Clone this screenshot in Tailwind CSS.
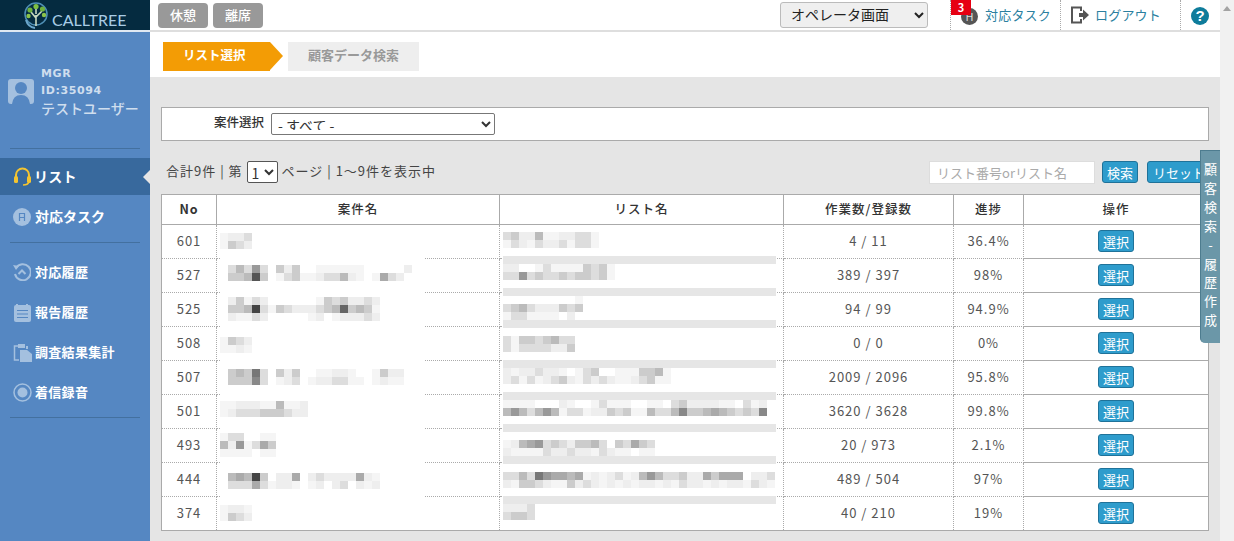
<!DOCTYPE html>
<html lang="ja">
<head>
    <meta charset="UTF-8">
    <title>CALLTREE</title>
    <script src="https://cdn.jsdelivr.net/npm/@tailwindcss/browser@4"></script>
</head>
<body class="w-[1234px] h-[541px] overflow-hidden bg-[#e5e5e5] text-[#333] text-[13px] font-['Noto_Sans_CJK_JP','Noto_Sans',sans-serif]">
<div class="flex h-[541px]">

    <!-- sidebar -->
    <aside class="w-[150px] shrink-0 h-full bg-[#5587c2] text-white">
        <div class="h-[30px] bg-[#052b40] flex items-center pl-[23px] gap-[2px]">
            <svg width="27" height="29" viewBox="0 0 27 29" class="shrink-0">
                <circle cx="13" cy="13" r="11" fill="none" stroke="#4f8fb5" stroke-width="1.5"/>
                <path d="M3 19 Q5 26 12 27" fill="none" stroke="#6ba7cc" stroke-width="2"/>
                <path d="M13 25 V14 M13 17 L8 11 M13 16 L19 10 M13 13 V7" stroke="#c9d9c0" stroke-width="1.6" fill="none"/>
                <circle cx="7" cy="9" r="2.6" fill="#6fb13d"/>
                <circle cx="13" cy="5.5" r="2.6" fill="#7fc043"/>
                <circle cx="19.500" cy="8" r="2.6" fill="#6fb13d"/>
                <circle cx="21" cy="14" r="2.2" fill="#8bc34a"/>
                <circle cx="5.500" cy="15" r="2.2" fill="#8bc34a"/>
            </svg>
            <span class="font-['Lato',sans-serif] text-[16px] leading-none text-[#a9cde6] pt-[9px]">CALLTREE</span>
        </div>
        <div class="h-[2px] bg-[#dfe8f2]"></div>

        <div class="h-[116px] flex items-center pl-[8px] pt-[2px] gap-[7px] text-[#cfdeee]">
            <svg width="26" height="25" viewBox="0 0 26 25" class="shrink-0">
                <rect width="26" height="25" rx="3" fill="#a4c0df"/>
                <circle cx="13" cy="9" r="6" fill="#5587c2"/>
                <path d="M4 25 Q5 16 13 16 Q21 16 22 25Z" fill="#5587c2"/>
            </svg>
            <div class="font-bold leading-[17.500px]">
                <div class="font-['DejaVu_Sans',sans-serif] text-[11px] tracking-[0.6px]">MGR</div>
                <div class="font-['DejaVu_Sans',sans-serif] text-[11px] tracking-[0.6px]">ID:35094</div>
                <div class="text-[14px] font-medium whitespace-nowrap">テストユーザー</div>
            </div>
        </div>
        <div class="mx-[10px] h-px bg-[#43709f]"></div>

        <nav class="mt-[9px] font-bold text-[13px] tracking-[0.3px]">
            <div class="relative h-[37px] bg-[#38699d] flex items-center pl-[13px] gap-[2px]">
                <svg width="19" height="19" viewBox="0 0 19 19" class="shrink-0">
                    <path d="M3 12 V8 A6.500 6.500 0 0 1 16 8 V12" fill="none" stroke="#f4c430" stroke-width="2"/>
                    <rect x="1" y="9" width="4" height="7" rx="1.500" fill="#f4c430"/>
                    <rect x="14" y="9" width="4" height="7" rx="1.500" fill="#f4c430"/>
                    <path d="M16 15 Q15 18 10 18" fill="none" stroke="#f4c430" stroke-width="1.500"/>
                </svg>
                <span class="text-[14px]">リスト</span>
                <span class="absolute right-0 top-[12px] border-y-[7px] border-y-transparent border-r-[7px] border-r-[#e5e5e5]"></span>
            </div>
            <div class="h-[43px] flex items-center pl-[13px] gap-[4px]">
                <svg width="18" height="18" viewBox="0 0 18 18" class="shrink-0">
                    <circle cx="9" cy="9" r="9" fill="#a4c0df"/>
                    <path d="M6.500 13 V5.500 H11.500 V13 M6.500 9.500 H11.500" fill="none" stroke="#5587c2" stroke-width="1.200"/>
                </svg>
                <span class="text-[14px] tracking-normal">対応タスク</span>
            </div>
            <div class="mx-[10px] mt-[4px] h-px bg-[#43709f]"></div>
            <div class="mt-[9px] h-[40px] flex items-center pl-[13px] gap-[4px]">
                <svg width="18" height="18" viewBox="0 0 18 18" class="shrink-0">
                    <path d="M3 5 A8 8 0 1 1 2 11" fill="none" stroke="#a4c0df" stroke-width="2"/>
                    <path d="M0 2 L6 3 L3 7Z" fill="#a4c0df"/>
                    <path d="M5.500 11 L9 7.500 L12.500 11" fill="none" stroke="#a4c0df" stroke-width="2"/>
                </svg>
                <span>対応履歴</span>
            </div>
            <div class="h-[40px] flex items-center pl-[13px] gap-[4px]">
                <svg width="18" height="19" viewBox="0 0 18 19" class="shrink-0">
                    <rect x="1" y="2" width="17" height="17" rx="2" fill="#a4c0df"/>
                    <path d="M4 1 V3 M14 1 V3" stroke="#a4c0df" stroke-width="2"/>
                    <path d="M4 7.500 H15 M4 11 H15 M4 14.500 H15" stroke="#5587c2" stroke-width="1"/>
                </svg>
                <span>報告履歴</span>
            </div>
            <div class="h-[40px] flex items-center pl-[13px] gap-[3px]">
                <svg width="19" height="19" viewBox="0 0 19 19" class="shrink-0">
                    <path d="M5 3 H1.500 V17 H6" fill="none" stroke="#a4c0df" stroke-width="1.500"/>
                    <path d="M5 1 H12 V5 H5Z M13 3 H15 V6 H13Z" fill="#a4c0df"/>
                    <path d="M7 7 H14 L19 11 V19 H7Z" fill="#a4c0df"/>
                </svg>
                <span>調査結果集計</span>
            </div>
            <div class="h-[40px] flex items-center pl-[13px] gap-[3px]">
                <svg width="19" height="19" viewBox="0 0 19 19" class="shrink-0">
                    <circle cx="9.500" cy="9.500" r="8.500" fill="none" stroke="#a4c0df" stroke-width="1.500"/>
                    <circle cx="9.500" cy="9.500" r="5" fill="#a4c0df"/>
                </svg>
                <span>着信録音</span>
            </div>
            <div class="mx-[10px] mt-[5px] h-px bg-[#43709f]"></div>
        </nav>
    </aside>

    <!-- main -->
    <main class="relative w-[1070px] shrink-0 h-full">
        <header class="relative h-[32px] bg-white border-b-2 border-[#dedede] flex items-start">
            <div class="flex gap-[5px] pl-[8px] pt-[3px] w-[630px]">
                <button class="w-[50px] h-[25px] rounded-[4px] bg-[#999] text-white font-medium text-[13px] pb-[2px]">休憩</button>
                <button class="w-[50px] h-[25px] rounded-[4px] bg-[#999] text-white font-medium text-[13px] pb-[2px]">離席</button>
            </div>
            <select class="mt-[2px] w-[148px] h-[26px] pl-[6px] pb-[4px] text-[14px] text-[#222] bg-[#efefef] border border-[#bbb] rounded-[3px]">
                <option>オペレータ画面</option>
            </select>
            <div class="relative ml-[22px] h-[30px] w-[110px] border-l border-dotted border-[#aaa] flex items-center pl-[10px] gap-[7px] text-[#2b7f9f]">
                <span class="w-[17px] h-[17px] rounded-full bg-[#555] text-[#ddd] text-[11px] leading-[17px] text-center mt-[3px]">H</span>
                <span class="absolute left-0 top-0 w-[20px] h-[15px] bg-[#e60012] text-white text-[11px] font-bold leading-[14px] text-center">3</span>
                <span class="text-[13px] tracking-[0.2px]">対応タスク</span>
            </div>
            <div class="h-[30px] w-[120px] border-l border-dotted border-[#aaa] flex items-center pl-[10px] gap-[6px] text-[#2b7f9f]">
                <svg width="18" height="18" viewBox="0 0 18 18" class="shrink-0">
                    <path d="M10 5 V1.500 H1 V16.500 H10 V13" fill="none" stroke="#555" stroke-width="2"/>
                    <path d="M8 7 H12 V3.500 L18 9 L12 14.500 V11 H8Z" fill="#555"/>
                </svg>
                <span class="text-[13px] tracking-[0.2px]">ログアウト</span>
            </div>
            <div class="h-[30px] flex-1 border-l border-dotted border-[#aaa] flex items-center pl-[10px]">
                <span class="w-[18px] h-[18px] rounded-full bg-[#0e7c9b] text-white font-['Liberation_Sans',sans-serif] font-bold text-[15px] leading-[18px] text-center mt-[2px]">?</span>
            </div>
        </header>

        <div class="h-[45px] bg-white pl-[13px] pt-[10px] flex font-bold text-[13px]">
            <div class="relative w-[107px] h-[29px] bg-[#f39c05] text-white flex items-center pl-[20px] pb-[3px] text-[12.500px]">
                リスト選択
                <span class="absolute left-[107px] top-0 border-y-[14.500px] border-y-transparent border-l-[13px] border-l-[#f39c05]"></span>
            </div>
            <div class="ml-[18px] w-[131px] h-[29px] pb-[3px] bg-[#eee] text-[#999] flex items-center justify-center">顧客データ検索</div>
        </div>

        <div class="ml-[11px] w-[1048px] mt-[30px] h-[34px] bg-white border border-[#aaa] flex items-center pl-[52px] gap-[7px]">
            <span class="font-medium text-[12.500px] pb-[3px]">案件選択</span>
            <select class="w-[224px] h-[22px] pl-[2px] pb-[4px] text-[14px] bg-white border border-[#777] rounded-[2px]">
                <option>- すべて -</option>
            </select>
        </div>

        <div class="ml-[11px] w-[1048px] mt-[19px] h-[24px] flex items-center">
            <span class="pl-[5px] text-[13px] tracking-[1px] text-[#444] pb-[2px]">合計9件 | 第</span>
            <select class="mx-[4px] w-[31px] h-[22px] text-[14px] bg-white border border-[#555] rounded-[2px]"><option>1</option></select>
            <span class="text-[13px] tracking-[1px] text-[#444] pb-[2px]">ページ | 1～9件を表示中</span>
            <input placeholder="リスト番号orリスト名" class="ml-auto mr-[2px] w-[166px] h-[23px] px-[7px] text-[13px] bg-white border border-[#ddd] placeholder:text-[#aaa]">
            <button class="ml-[5px] w-[36px] h-[22px] rounded-[3px] bg-[#2e9ccc] border border-[#1f7299] text-white text-[13px] leading-none">検索</button>
            <button class="ml-[9px] w-[62px] h-[22px] rounded-[3px] bg-[#2e9ccc] border border-[#1f7299] text-white text-[13px] leading-none text-left pl-[5px] whitespace-nowrap">リセット</button>
        </div>

        <div class="ml-[11px] w-[1048px] mt-[10px] bg-white border border-[#aaa]">
            <table class="table-fixed w-[1046px] border-separate border-spacing-0 tracking-[1px]">
                <colgroup>
                    <col class="w-[55px]"><col class="w-[283px]"><col class="w-[284px]"><col class="w-[170px]"><col class="w-[70px]"><col class="w-[184px]">
                </colgroup>
                <thead>
                    <tr class="h-[30px] text-[12.500px] font-medium">
                        <th class="border-r border-b border-[#aaa] font-bold">No</th>
                        <th class="border-r border-b border-[#aaa] font-medium">案件名</th>
                        <th class="border-r border-b border-[#aaa] font-medium">リスト名</th>
                        <th class="border-r border-b border-[#aaa] font-medium">作業数/登録数</th>
                        <th class="border-r border-b border-[#aaa] font-medium">進捗</th>
                        <th class="border-b border-[#aaa] font-medium">操作</th>
                    </tr>
                </thead>
                <tbody id="rows"></tbody>
            </table>
        </div>

        <!-- side tab -->
        <div class="absolute right-0 top-[150px] w-[20px] h-[193px] bg-[#6b97a8] border-l border-t border-[#4d7c8f] rounded-bl-[5px] flex flex-col items-center pt-[9px] text-white text-[13px] leading-[18.900px]">
            <span>顧</span><span>客</span><span>検</span><span>索</span><span>-</span><span>履</span><span>歴</span><span>作</span><span>成</span>
        </div>
    </main>

    <!-- scrollbar -->
    <div class="w-[14px] shrink-0 h-full bg-[#f1f1f1] flex justify-center pt-[6px]">
        <span class="h-0 border-x-[4px] border-x-transparent border-b-[5px] border-b-[#a3a3a3]"></span>
    </div>
</div>

<script>
    // rows: mosaics are [top offset from the table row, ...lines], one hex digit per 8px block
    const data = [
        { no: 601, count: "4 / 11", rate: "36.4%",
          name: { y: 233, lines: ["feed", "fcde"] },
          list: { y: 232, lines: ["dceebffeeddf", "fdefdeedfddf"] } },
        { no: 527, count: "389 / 397", rate: "98%", bar: 256,
          name: { y: 265, lines: [" dbd9d cec  ffffff     e", " ccb5c fdcffeddbef fade"] },
          list: { y: 264, lines: ["ee  fdffffcdcf", "dd9dcddcdccdcf"] } },
        { no: 525, count: "94 / 99", rate: "94.9%", bar: 288,
          name: { y: 297, lines: [" ecfde      fcdceede", " ccb4dfcdeeedcb6cbcf", " effde     fe feeede"] },
          list: { y: 296, lines: ["         f", "dcbdeeecdc", "fddffff e"] } },
        { no: 508, count: "0 / 0", rate: "0%", bar: 320,
          name: { y: 337, lines: ["fcde", "ffef"] },
          list: { y: 336, lines: ["dfccdcbdd", "dfddddeec"] } },
        { no: 507, count: "2009 / 2096", rate: "95.8%", bar: 360,
          name: { y: 369, lines: [" cbc7d cec  ffeef  fcee", " ccc8d fed feeddff feff"] },
          list: { y: 368, lines: ["efeedeef fdc  fffccbf", "edfdfedcefdedeffedcff"] } },
        { no: 501, count: "3620 / 3628", rate: "99.8%", bar: 392,
          name: { y: 401, lines: ["ffeeeffbffe", "fedddcccdee"] },
          list: { y: 400, lines: ["ffff   ef  fdfff  ff dceeeeff dfe", "b9bdb9bfddfeecdcffbddb8ccbabcdcd8"] } },
        { no: 493, count: "20 / 973", rate: "2.1%", bar: 424,
          name: { y: 433, lines: ["fdd  ff", "be9fdac", "ffff ff"] },
          list: { y: 440, lines: ["feba9dcdeccbd cdacd", "effffdeedeefdeff ff"] } },
        { no: 444, count: "489 / 504", rate: "97%", bar: 456,
          name: { y: 473, lines: [" bab4c eea edeeeeaef", " dddadfeef fe ed efe"] },
          list: { y: 472, lines: ["ddbd79aabafefedfeb9bddceeacaaa eed", "efccdeffcedefefefeefefdeefefeefdef"] } },
        { no: 374, count: "40 / 210", rate: "19%", bar: 496,
          name: { y: 505, lines: ["feef", "fcde"] },
          list: { y: 504, lines: ["eeed", "dccd"] } }
    ];

    function blockColor(c) {
        if (c === " ") return "transparent";
        if (c === "f") return "#f5f5f5";
        return "#" + c + c + c;
    }

    // blurred-out customer text, drawn as 8px blocks
    function mosaic(lines) {
        return lines.map(line =>
            '<div class="flex">' + line.split("").map(c =>
                `<span class="w-[8px] h-[8px] shrink-0" style="background:${blockColor(c)}"></span>`
            ).join("") + '</div>'
        ).join("");
    }

    const dotted = "border-r border-dotted border-[#aaa]";
    document.getElementById("rows").innerHTML = data.map((row, i) => {
        const top = 225 + 34 * i;
        const last = i === data.length - 1;
        const line = last ? "border-b-0" : "border-b border-b-[#aaa]";
        const mask = i > 0 ? '<span class="absolute left-[3px] -top-px w-[205px] h-px bg-white"></span>' : "";
        const bar = row.bar ? `<span class="absolute left-[3px] w-[273px] h-[8px] bg-[#e6e6e6]" style="top:${row.bar - top}px"></span>` : "";
        return `<tr class="${last ? "h-[33px]" : "h-[34px]"} text-center text-[13px] text-[#555]">
            <td class="pb-[1px] ${dotted} ${line}">${row.no}</td>
            <td class="relative align-top ${dotted} ${line}">${mask}<div class="pl-[3px]" style="padding-top:${row.name.y - top}px">${mosaic(row.name.lines)}</div></td>
            <td class="relative align-top ${dotted} ${line}">${bar}<div class="pl-[3px]" style="padding-top:${row.list.y - top}px">${mosaic(row.list.lines)}</div></td>
            <td class="pb-[1px] ${dotted} ${line}">${row.count}</td>
            <td class="pb-[1px] ${dotted} ${line}">${row.rate}</td>
            <td class="pb-[1px] ${line}"><button class="w-[36px] h-[22px] rounded-[3px] bg-[#2e9ccc] border border-[#1f7299] text-white text-[13px] leading-none tracking-normal align-middle">選択</button></td>
        </tr>`;
    }).join("");
</script>
</body>
</html>
